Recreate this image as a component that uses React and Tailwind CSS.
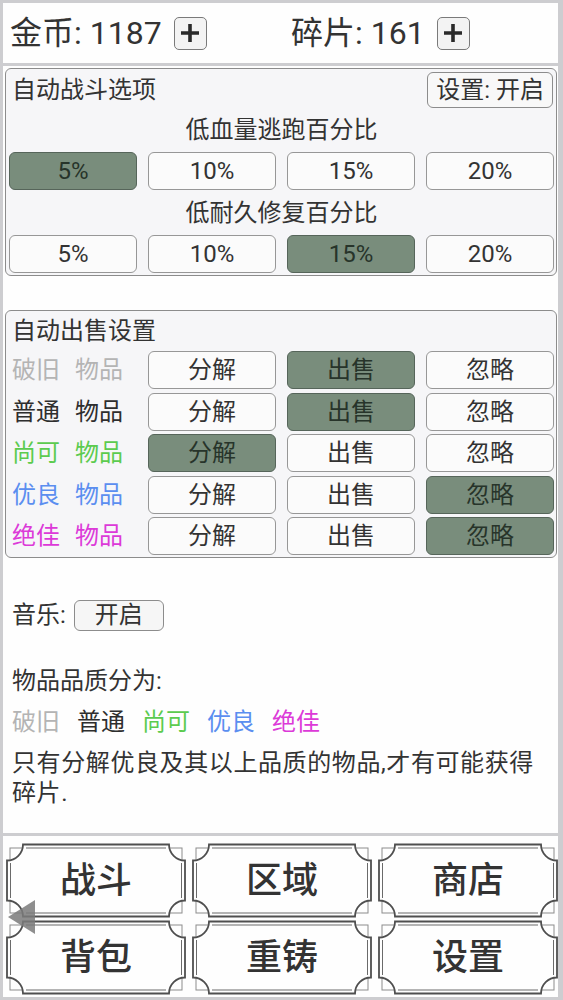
import React, { useState } from "react";

const OPTS = ["5%", "10%", "15%", "20%"];

const QUALITY = [
  { name: "破旧", color: "text-[#b4b4b4]", pick: 1 },
  { name: "普通", color: "text-[#2e2e2e]", pick: 1 },
  { name: "尚可", color: "text-[#5ccb4f]", pick: 0 },
  { name: "优良", color: "text-[#5b8ef0]", pick: 2 },
  { name: "绝佳", color: "text-[#dc3ad8]", pick: 2 },
];

const ACTIONS = ["分解", "出售", "忽略"];

const NAV = ["战斗", "区域", "商店", "背包", "重铸", "设置"];

function OptButton({ active, children, onClick }) {
  return (
    <button
      onClick={onClick}
      className={`h-[38px] rounded-[6px] border text-[24px] leading-none ${
        active
          ? "bg-[#798d7c] border-[#56655a] text-[#27342a]"
          : "bg-[#fbfbfb] border-[#979797] text-[#333]"
      }`}
    >
      {children}
    </button>
  );
}

function PlusButton() {
  return (
    <button className="w-[33px] h-[33px] rounded-[5px] border border-[#7a7a7a] bg-[#f3f3f3] flex items-center justify-center">
      <svg width="20" height="20" viewBox="0 0 20 20">
        <path d="M10 1V19M1 10H19" stroke="#2a2a2a" strokeWidth="3.6" />
      </svg>
    </button>
  );
}

// frame of the bottom nav buttons (concave corners)
function NavFrame() {
  const w = 180;
  const h = 75;
  const r = 16;
  const d = `M${r + 1} 1.5 H${w - r - 1} A${r} ${r} 0 0 0 ${w - 1} ${r + 1.5} V${h - r - 1.5} A${r} ${r} 0 0 0 ${w - r - 1} ${h - 1.5} H${r + 1} A${r} ${r} 0 0 0 1 ${h - r - 1.5} V${r + 1.5} A${r} ${r} 0 0 0 ${r + 1} 1.5 Z`;
  return (
    <svg
      className="absolute inset-0 w-full h-full"
      viewBox={`0 0 ${w} ${h}`}
      preserveAspectRatio="none"
    >
      <rect x="4" y="5" width={w - 8} height={h - 10} fill="none" stroke="#8c8c8c" strokeWidth="1" />
      <path d={d} fill="#fefefe" stroke="#4f4f4f" strokeWidth="1.8" />
      <path
        d={`M20 5 H${w - 20} M${w - 4.5} 20 V${h - 20} M${w - 20} ${h - 5} H20 M4.5 ${h - 20} V20`}
        stroke="#6a6a6a"
        strokeWidth="1"
      />
    </svg>
  );
}

export default function App() {
  const [flee, setFlee] = useState(0);
  const [repair, setRepair] = useState(2);
  const [sell, setSell] = useState(QUALITY.map((q) => q.pick));

  return (
    <div className="h-screen w-full bg-[#cdcdd0] pl-[3px] pr-[5px] pt-[3px] pb-[3px] flex flex-col gap-[3px] text-[#333] font-['Roboto','Noto_Sans_CJK_SC',sans-serif]">
      {/* top bar */}
      <div className="h-[60px] shrink-0 bg-[#fefefe] flex items-center pl-[7px] text-[32px] leading-none">
        <div className="w-[281px] flex items-center">
          <span>金币: 1187</span>
          <span className="ml-[12px]">
            <PlusButton />
          </span>
        </div>
        <div className="flex items-center">
          <span>碎片: 161</span>
          <span className="ml-[12px]">
            <PlusButton />
          </span>
        </div>
      </div>

      {/* main */}
      <div className="flex-1 bg-[#fefefe] pl-[2px] pr-[1px] pt-[2px] text-[24px]">
        {/* auto battle */}
        <div className="rounded-[6px] border border-[#8c8c8c] bg-[#f6f6f8] pl-[3px] pr-[2px] pt-[3px] pb-[2px]">
          <div className="h-[36px] flex items-center justify-between">
            <span className="pl-[3px]">自动战斗选项</span>
            <button className="h-[36px] px-[8px] mr-[1px] rounded-[6px] border border-[#8c8c8c] bg-[#f8f8f8] leading-none">
              设置: 开启
            </button>
          </div>
          <div className="h-[44px] flex items-center justify-center">低血量逃跑百分比</div>
          <div className="grid grid-cols-4 gap-x-[11px]">
            {OPTS.map((o, i) => (
              <OptButton key={o} active={flee === i} onClick={() => setFlee(i)}>
                {o}
              </OptButton>
            ))}
          </div>
          <div className="h-[45px] flex items-center justify-center">低耐久修复百分比</div>
          <div className="grid grid-cols-4 gap-x-[11px]">
            {OPTS.map((o, i) => (
              <OptButton key={o} active={repair === i} onClick={() => setRepair(i)}>
                {o}
              </OptButton>
            ))}
          </div>
        </div>

        {/* auto sell */}
        <div className="mt-[34px] rounded-[6px] border border-[#8c8c8c] bg-[#f6f6f8] pl-[3px] pr-[2px] pb-[2px]">
          <div className="h-[38px] flex items-center pl-[3px] pt-[2px]">自动出售设置</div>
          <div className="flex flex-col gap-y-[3.5px] mt-[2px]">
            {QUALITY.map((q, row) => (
              <div key={q.name} className="grid grid-cols-4 gap-x-[11px] items-center">
                <div className={`pl-[3px] flex gap-[15px] ${q.color}`}>
                  <span>{q.name}</span>
                  <span>物品</span>
                </div>
                {ACTIONS.map((a, i) => (
                  <OptButton
                    key={a}
                    active={sell[row] === i}
                    onClick={() => setSell((s) => s.map((v, k) => (k === row ? i : v)))}
                  >
                    {a}
                  </OptButton>
                ))}
              </div>
            ))}
          </div>
        </div>

        {/* music + notes */}
        <div className="pl-[7px] pr-[4px]">
          <div className="mt-[39px] flex items-center">
            <span>音乐:</span>
            <button className="ml-[8px] w-[90px] h-[31px] rounded-[6px] border border-[#8c8c8c] bg-[#f6f6f6] leading-none">
              开启
            </button>
          </div>
          <div className="mt-[33px] leading-[30px]">物品品质分为:</div>
          <div className="mt-[11px] flex gap-[17px] leading-[30px]">
            {QUALITY.map((q) => (
              <span key={q.name} className={q.color}>
                {q.name}
              </span>
            ))}
          </div>
          <p className="mt-[11px] leading-[30px] tracking-[0.6px]">
            只有分解优良及其以上品质的物品,才有可能获得碎片.
          </p>
        </div>
      </div>

      {/* bottom nav */}
      <div className="relative h-[161px] shrink-0 bg-[#fefefe] pl-[3px] pt-[7px] grid grid-cols-3 grid-rows-[75px_75px] gap-x-[6px] gap-y-[2px]">
        {NAV.map((n) => (
          <button key={n} className="relative w-[180px] h-[75px] flex items-center justify-center">
            <NavFrame />
            <span className="relative text-[36px] font-medium leading-none text-[#333]">{n}</span>
          </button>
        ))}
        <svg className="absolute left-[5px] top-[64px]" width="30" height="36" viewBox="0 0 30 36">
          <polygon points="0,17 27,0 27,34" fill="#7a7a7a" opacity="0.85" />
        </svg>
      </div>
    </div>
  );
}
